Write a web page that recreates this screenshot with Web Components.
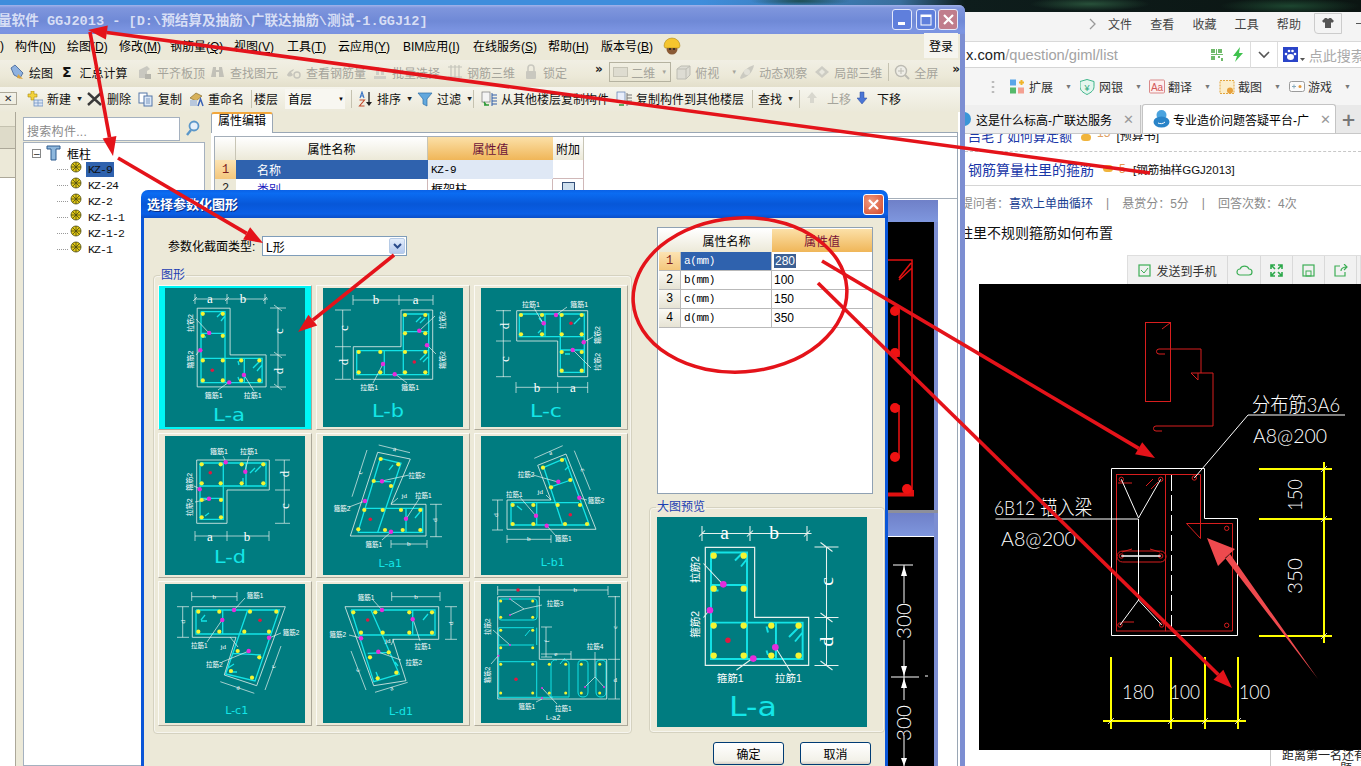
<!DOCTYPE html>
<html lang="zh">
<head>
<meta charset="utf-8">
<title>GGJ2013</title>
<style>
html,body{margin:0;padding:0;background:#1b3f6e;overflow:hidden;}
body{width:1361px;height:766px;font:12px "Liberation Sans","Noto Sans CJK SC",sans-serif;}
</style>
</head>
<body>
<gg-desktop>
  <browser-window></browser-window>
  <app-window></app-window>
  <cad-strip></cad-strip>
  <param-dialog></param-dialog>
  <red-marks></red-marks>
</gg-desktop>
<script>
class ShadowEl extends HTMLElement {
  constructor() {
    super();
    this.attachShadow({ mode: "open" });
  }
  connectedCallback() {
    this.shadowRoot.innerHTML = this.render();
  }
}
const CJK = '"Liberation Sans","Noto Sans CJK SC",sans-serif';
const MONO = '"Liberation Mono","Noto Sans CJK SC",monospace';

// toolbar icons, 16x16
const ICONS = {
  draw: '<path d="M2 4l4-3 8 8-3 5-6-3z" fill="#8fb2e0" stroke="#3c5f94" stroke-width=".8"/><path d="M9 10l5 5-6-1z" fill="#d9a441"/>',
  plain: '<path d="M2 14V6l8-4 3 3-3 2v7z" fill="#c9c8c0"/><rect x="8" y="10" width="6" height="5" fill="#b6b5ac"/>',
  binoc: '<path d="M3 3h3v3h3V3h3l2 10H9V8H6v5H1z" fill="#c2c1b8"/>',
  glass: '<path d="M1 11c1-3 4-5 7-6l-1 2-2 1 2 3c-2 2-5 2-6 0z" fill="#c6c5bc"/><circle cx="11" cy="11" r="3" fill="none" stroke="#c6c5bc" stroke-width="1.5"/>',
  batch: '<path d="M2 12h12v3H2zM4 3h3v8H4zM9 5h3v6H9z" fill="#cfcec5"/>',
  grid: '<path d="M1 3h14M1 13h14M4 1v14M8 1v14M12 1v14" stroke="#c4c3ba" fill="none" stroke-width="1.2"/>',
  lock: '<rect x="3" y="7" width="10" height="8" rx="1" fill="#c9c8bf"/><path d="M5 7V4a3 3 0 0 1 6 0v3" fill="none" stroke="#c9c8bf" stroke-width="1.6"/>',
  cube: '<path d="M2 5l4-3h9v9l-4 4H2z" fill="#dddcd3" stroke="#bdbcb3"/><path d="M2 5h9v10M11 5l4-3" fill="none" stroke="#bdbcb3"/>',
  orbit: '<path d="M1 14c2-6 7-11 14-13-1 7-6 12-13 14z" fill="#cbcac1"/><circle cx="8" cy="8" r="3" fill="#e2e1d8"/>',
  part: '<path d="M8 2l7 6-7 6-7-6z" fill="#cdccc3"/><path d="M5 8l3-3 3 3-3 3z" fill="#e8e7de"/>',
  zoom: '<circle cx="7" cy="7" r="5.5" fill="#eeede6" stroke="#bcbbb2" stroke-width="1.4"/><path d="M7 4v6M4 7h6" stroke="#bcbbb2"/><path d="M11 11l4 4" stroke="#bcbbb2" stroke-width="2"/>',
  add: '<path d="M4 0h3v3h3v3H7v3H4V6H1V3h3z" fill="#f2d23c" stroke="#a98b12" stroke-width=".6"/><rect x="7" y="9" width="9" height="6" fill="#dde7f5" stroke="#6b8fc0" stroke-width=".8"/><path d="M7 12h9M11 9v6" stroke="#6b8fc0" stroke-width=".7"/>',
  del: '<path d="M1 2l13 12M14 2L1 14" stroke="#3a3a3a" stroke-width="2.4"/>',
  copy: '<rect x="1" y="2" width="8" height="10" fill="#fff" stroke="#5577a8"/><rect x="6" y="5" width="8" height="10" fill="#dce8f7" stroke="#5577a8"/><path d="M8 8h4M8 10h4M8 12h4" stroke="#5577a8" stroke-width=".7"/>',
  rename: '<path d="M2 7l6-5 6 3-6 5z" fill="#d7b15a" stroke="#7a5f22" stroke-width=".6"/><path d="M2 9h7v6H2z" fill="#b8c7dc"/><path d="M10 15l2.500-7 2.500 7" fill="none" stroke="#3d64b5" stroke-width="1.5"/>',
  sort: '<path d="M12 1v12" stroke="#222" stroke-width="1.3"/><path d="M9 11l3 4 3-4z" fill="#222"/><path d="M3 7l2-6 2 6M3.800 5h2.400" fill="none" stroke="#3a74c4" stroke-width="1.100"/><path d="M2.500 9h5l-5 6h5" fill="none" stroke="#c04a2c" stroke-width="1.100"/>',
  funnel: '<path d="M1 2h14l-5 6v7l-4-2V8z" fill="#62a8dd" stroke="#2d6ea7" stroke-width=".7"/>',
  copyfrom: '<rect x="1" y="1" width="8" height="10" fill="#f4f4f4" stroke="#777" stroke-width=".7"/><path d="M3 14h5M3 11l2 3" stroke="#2c9a37" stroke-width="1.500"/><path d="M11 4h5M11 7h5M11 10h5M11 13h5" stroke="#315fa8" stroke-width="1.200"/><path d="M11 2v13" stroke="#315fa8"/>',
  copyto: '<rect x="1" y="1" width="8" height="10" fill="#e8eefb" stroke="#5c7bb0" stroke-width=".7"/><path d="M3 14h5" stroke="#2c9a37" stroke-width="1.500"/><path d="M11 4h5M11 7h5M11 10h5M11 13h5" stroke="#777" stroke-width="1.200"/><path d="M11 2v13" stroke="#777"/>',
  up: '<path d="M5 1l5 6H7v5H3V7H0z" fill="#d8d7ce"/>',
  down: '<path d="M3 1h4v6h3l-5 6-5-6h3z" fill="#4b76d6" stroke="#2c4c9a" stroke-width=".5"/>',
  coil: '<circle cx="6" cy="6" r="5" fill="#e3c914" stroke="#4b4a12" stroke-width=".8"/><path d="M1 6h10M6 1v10M2.500 2.500l7 7M9.500 2.500l-7 7" stroke="#4b4a12" stroke-width=".8"/>',
};

function icon(name, size) {
  return `<svg width="${size || 16}" height="${size || 16}" viewBox="0 0 16 16" style="flex:none;display:block">${ICONS[name] || ""}</svg>`;
}

class GgDesktop extends ShadowEl {
  render() {
    return `<style>
      :host{display:block;position:relative;width:1361px;height:766px;overflow:hidden;
        background:
          radial-gradient(60px 7px at 1090px 4px,#28513a,transparent),
          radial-gradient(70px 8px at 1290px 6px,#1d4630,transparent),
          radial-gradient(50px 5px at 800px 1px,#1e4d52,transparent),
          linear-gradient(90deg,#3f8ddc 0,#3f8ddc 700px,#3a6f9d 900px,#0e1d1c 965px,#0b1512 1361px);}
    </style><slot></slot>`;
  }
}

class ToolItem extends ShadowEl {
  render() {
    const off = this.hasAttribute("off");
    const ic = this.getAttribute("icon");
    const caret = this.hasAttribute("caret");
    return `<style>
      :host{display:flex;align-items:center;gap:4px;flex:none;height:100%;color:${off ? "#a5a49b" : "#111"};white-space:nowrap;}
      .c{font-size:7px;margin-left:1px;color:${off ? "#a5a49b" : "#222"};transform:scaleX(1.1)}
    </style>${ic ? icon(ic) : ""}<slot></slot>${caret ? '<span class="c">▼</span>' : ""}`;
  }
}

class AppWindow extends ShadowEl {
  render() {
    const menus = [["",15,")"],["构件(<u>N</u>)",52],["绘图(<u>D</u>)",52],["修改(<u>M</u>)",51],["钢筋量(<u>Q</u>)",64],["视图(<u>V</u>)",53],["工具(<u>T</u>)",51],["云应用(<u>Y</u>)",65],["BIM应用(<u>I</u>)",70],["在线服务(<u>S</u>)",75],["帮助(<u>H</u>)",53],["版本号(<u>B</u>)",62]];
    const tree = ["KZ-9","KZ-24","KZ-2","KZ-1-1","KZ-1-2","KZ-1"];
    return `<style>
      :host{position:absolute;left:0;top:5px;width:965px;height:761px;display:flex;flex-direction:column;overflow:hidden;
        background:#7c8ed2;border-top-right-radius:6px;}
      .title{height:29px;flex:none;display:flex;align-items:center;box-sizing:border-box;padding:0 7px 0 0;
        background:linear-gradient(#a2b3ea 0,#7f96dd 10%,#6f89d6 55%,#7c95e2 90%,#7a92df 100%);}
      .title b{font:700 13.6px ${MONO};color:#d7def5;margin:-2px 0 0 -2px;white-space:pre;flex:1;}
      .wb{width:20px;height:21px;margin-left:4px;border:1px solid #e4e9fb;border-radius:3px;box-sizing:border-box;background:#5f7fdc;display:flex;align-items:center;justify-content:center;}
      .wb:last-child{margin-left:2px;background:#c07d8c;}
      .menu{height:26px;flex:none;display:flex;align-items:center;background:#ece9d8;margin-right:5px;padding-bottom:3px;box-sizing:border-box;}
      .menu span{flex:none;display:block;white-space:nowrap;}
      .menu u{text-underline-offset:1px;}
      .login{margin-left:auto;margin-right:2px;background:#f6f5ef;padding:4px 5px;}
      .hat{width:18px;height:18px;}
      .r1{height:27px;flex:none;display:flex;align-items:center;padding:0 0 3px 9px;box-sizing:border-box;margin-right:5px;
        background:linear-gradient(#f1efe4,#ece9d8 60%,#e3dfcb);}
      .r2{height:26px;flex:none;display:flex;align-items:center;padding-bottom:3px;box-sizing:border-box;margin-right:5px;background:linear-gradient(#f6f5ee,#ebe8d8);}
      .sep{flex:none;width:1px;height:18px;background:#c5c2b0;}
      .chev{font:700 12px "DejaVu Sans",sans-serif;color:#222;margin-top:-6px;}
      .combo{flex:none;box-sizing:border-box;display:flex;align-items:center;height:20px;white-space:nowrap;}
      .x{flex:none;width:17px;height:13px;border:1px solid #aca899;border-left:0;box-sizing:border-box;margin-right:10px;display:flex;align-items:center;justify-content:center;color:#333;font-size:10px;}
      .content{flex:1;display:flex;min-height:0;margin:-1px 5px 0 0;background:#ece9d8;}
      .nav{flex:none;width:16px;display:flex;flex-direction:column;border-right:1px solid #aca899;box-sizing:border-box;}
      .nav i{display:block;}
      .tree{flex:none;width:182px;margin-left:7px;display:flex;flex-direction:column;}
      .search{height:24px;margin-top:5px;display:flex;flex:none;}
      .search div{flex:1;border:1px solid #a5b1bf;background:#fff;color:#8a8a8a;padding:4px 3px;box-sizing:border-box;letter-spacing:.3px;}
      .search svg{margin:2px 4px 0 5px;}
      .list{flex:1;margin-top:1px;background:#fff;border:1px solid #a5b1bf;padding-top:2px;box-sizing:border-box;}
      .tr{height:16px;display:flex;align-items:center;font:11.5px ${MONO};color:#111;padding-left:33px;gap:3px;}
      .tr .d{width:11px;border-top:1px dotted #999;margin-right:-1px;}
      .tr em{font-style:normal;padding:1px 2px;line-height:13px;letter-spacing:-.9px;margin-left:-3px;}
      .tr.on em{background:#2f62ae;color:#111;}
      .root{height:16px;display:flex;align-items:center;padding-left:8px;gap:5px;font-family:${CJK};}
      .box{width:9px;height:9px;border:1px solid #888;font:9px/8px "DejaVu Sans";text-align:center;box-sizing:border-box;color:#222;}
      .main{flex:1;margin-left:6px;display:flex;flex-direction:column;min-width:0;margin-right:2px;box-shadow:2px 0 0 #fff;}
      .tabs{height:20px;flex:none;display:flex;border-bottom:1px solid #9aa7b5;}
      .tab{width:62px;box-sizing:border-box;border:1px solid #9aa7b5;border-bottom:0;border-top:2px solid #f2a73c;border-radius:3px 3px 0 0;background:#fff;text-align:center;line-height:15px;height:21px;}
      .panel{flex:1;background:#fff;border-right:1px solid #9aa7b5;padding:3px 0 0 3px;}
      .tbl{border:1px solid #a4aeb9;border-right:0;display:grid;grid-template-columns:21px 192px 125px 31px 1fr;grid-template-rows:23px 19px 19px;background:#fff;}
      .tbl div{box-sizing:border-box;display:flex;align-items:center;}
      .h{justify-content:center;background:linear-gradient(#fff,#ece9d8);border-right:1px solid #c8c5b5;}
      .hv{justify-content:center;background:linear-gradient(#fbe0a8,#f0b658);color:#6b1238;}
      .n{justify-content:center;background:linear-gradient(#fce3b3,#f4c77c);color:#7a1c1c;font:12px ${MONO};}
      .sel{background:#2f62ae;color:#fff;padding-left:21px;}
      .val{background:#dfe8f5;padding-left:3px;font:11px ${MONO};letter-spacing:-.3px;}
      .e{border-bottom:1px solid #d0b8b8;border-right:1px solid #d0b8b8;}
      .chk{width:11px;height:11px;border:1px solid #33507a;background:#cfe0ee;}
    </style>
    <div class="title"><b>量软件 GGJ2013 - [D:\\预结算及抽筋\\广联达抽筋\\测试-1.GGJ12]</b>
      <div class="wb"><svg width="12" height="12"><rect x="2" y="8" width="7" height="3" fill="#fff"/></svg></div>
      <div class="wb"><svg width="12" height="12"><rect x="1" y="1" width="10" height="10" fill="none" stroke="#fff" stroke-width="1"/><rect x="1" y="1" width="10" height="2" fill="#fff"/></svg></div>
      <div class="wb"><svg width="13" height="13"><path d="M2 2l9 9M11 2l-9 9" stroke="#fff" stroke-width="2.200"/></svg></div>
    </div>
    <div class="menu">
      ${menus.map(m => `<span style="width:${m[1]}px">${m[2] || m[0]}</span>`).join("")}
      <svg class="hat" viewBox="0 0 18 18"><circle cx="9" cy="12" r="5.500" fill="#8a5a34"/><path d="M1 9a8 8 0 0 1 16 0l-1 2H2z" fill="#f5c52e" stroke="#a27d12" stroke-width=".5"/><circle cx="7" cy="12" r="1" fill="#222"/><circle cx="11" cy="12" r="1" fill="#222"/></svg>
      <span class="login">登录</span>
    </div>
    <div class="r1">
      <tool-item icon="draw" style="width:53px">绘图</tool-item>
      <tool-item style="width:75px"><b style="font:700 14px 'DejaVu Sans';margin-right:4px">Σ</b>汇总计算</tool-item>
      <tool-item off icon="plain" style="width:73px">平齐板顶</tool-item>
      <tool-item off icon="binoc" style="width:76px">查找图元</tool-item>
      <tool-item off icon="glass" style="width:86px">查看钢筋量</tool-item>
      <tool-item off icon="batch" style="width:75px">批量选择</tool-item>
      <tool-item off icon="grid" style="width:76px">钢筋三维</tool-item>
      <tool-item off icon="lock" style="width:72px">锁定</tool-item>
      <span class="chev" style="width:15px">»</span>
      <div class="combo" style="width:62px;border:1px solid #b5b2a0;color:#a5a49b;padding-left:3px;gap:3px;margin-right:4px"><span style="width:15px;height:10px;background:#dedcd0;border:1px solid #c5c3b5;box-sizing:border-box"></span>二维<span style="font-size:6px;margin-left:auto;margin-right:3px">▼</span></div>
      <tool-item off icon="cube" style="width:64px">俯视<span style="font-size:6px;margin-left:8px">▼</span></tool-item>
      <tool-item off icon="orbit" style="width:75px">动态观察</tool-item>
      <tool-item off icon="part" style="width:74px">局部三维</tool-item>
      <span class="sep" style="margin-right:5px"></span>
      <tool-item off icon="zoom" style="width:58px">全屏</tool-item>
      <span class="chev">»</span>
    </div>
    <div class="r2">
      <span class="x">✕</span>
      <tool-item icon="add" caret style="width:60px">新建</tool-item>
      <tool-item icon="del" style="width:51px">删除</tool-item>
      <tool-item icon="copy" style="width:50px">复制</tool-item>
      <tool-item icon="rename" style="width:63px">重命名</tool-item>
      <span class="sep" style="margin-right:2px"></span>
      <tool-item style="width:31px">楼层</tool-item>
      <div class="combo" style="width:60px;background:#f8f7f1;padding-left:3px;margin-right:6px">首层<span style="font-size:6px;margin-left:auto;margin-right:1px">▼</span></div>
      <span class="sep" style="margin-right:5px"></span>
      <tool-item icon="sort" caret style="width:60px">排序</tool-item>
      <tool-item icon="funnel" caret style="width:56px">过滤</tool-item>
      <span class="sep" style="margin-right:7px"></span>
      <tool-item icon="copyfrom" style="width:135px">从其他楼层复制构件</tool-item>
      <tool-item icon="copyto" style="width:136px">复制构件到其他楼层</tool-item>
      <span class="sep" style="margin-right:5px"></span>
      <tool-item caret style="width:41px">查找</tool-item>
      <span class="sep" style="margin-right:7px"></span>
      <tool-item off icon="up" style="width:50px">上移</tool-item>
      <tool-item icon="down" style="width:50px">下移</tool-item>
    </div>
    <div class="content">
      <div class="nav">
        <i style="height:14px;background:#ece9d8;border-bottom:1px solid #c5c2b0"></i>
        <i style="height:21px;background:#dedbc9;border-bottom:1px solid #aca899"></i>
        <i style="height:28px;background:#ece9d8"></i>
        <i style="flex:1;background:#fff;border-top:1px solid #aca899"></i>
      </div>
      <div class="tree">
        <div class="search"><div>搜索构件...</div>
          <svg width="16" height="18" viewBox="0 0 16 18"><circle cx="9" cy="7" r="4.500" fill="#e6f0fa" stroke="#5b97c9" stroke-width="1.800"/><path d="M6 11l-4 5" stroke="#5b97c9" stroke-width="2.400"/></svg></div>
        <div class="list">
          <div class="root"><span class="box">−</span>
            <svg width="15" height="16" viewBox="0 0 15 16"><path d="M1 1h13v3H10v11H5V4H1z" fill="#8fb8dd" stroke="#2f5d8f" stroke-width="1"/></svg>
            <span style="margin-left:1px">框柱</span></div>
          ${tree.map((t, i) => `<div class="tr ${i ? "" : "on"}"><span class="d"></span>${icon("coil", 16)}<em>${t}</em></div>`).join("")}
        </div>
      </div>
      <div class="main">
        <div class="tabs"><div class="tab">属性编辑</div></div>
        <div class="panel">
          <div class="tbl">
            <div class="h"></div><div class="h">属性名称</div><div class="hv">属性值</div><div class="h">附加</div><div></div>
            <div class="n">1</div><div class="sel">名称</div><div class="val">KZ-9</div><div class="e"></div><div></div>
            <div class="n" style="background:#ece9d8;color:#222">2</div><div class="e" style="padding-left:21px;color:#1a1ac0">类别</div><div class="e" style="padding-left:3px">框架柱</div><div class="e" style="justify-content:center"><span class="chk"></span></div><div></div>
          </div>
        </div>
      </div>
    </div>`;
  }
}

class CadStrip extends ShadowEl {
  render() {
    return `<style>:host{position:absolute;left:888px;top:200px;width:50px;height:566px;display:block}
      svg{display:block} text{font:300 20px Lato,"Liberation Sans";fill:#fff}</style>
    <svg width="50" height="566" viewBox="888 200 50 566">
      <defs><linearGradient id="p" x1="0" y1="0" x2="0" y2="1"><stop offset="0" stop-color="#6f80c8"/><stop offset="1" stop-color="#7f97de"/></linearGradient></defs>
      <rect x="888" y="200" width="50" height="22" fill="url(#p)"/>
      <rect x="888" y="222" width="46" height="288" fill="#000"/>
      <rect x="934" y="222" width="4" height="544" fill="#7c8ed2"/>
      <rect x="888" y="510" width="50" height="3" fill="#8d8f9a"/>
      <rect x="888" y="513" width="46" height="24" fill="url(#p)"/>
      <rect x="888" y="537" width="46" height="229" fill="#000"/>
      <rect x="888" y="536" width="46" height="1" fill="#fff"/>
      <g fill="none" stroke="#e01010" stroke-width="1.600">
        <path d="M888 260H912V490M899 278L911 263M899 280L912 268" />
        <path d="M899 307V357M899 405V458"/>
        <path d="M888 494.500H912V490" stroke-width="4"/>
      </g>
      <g fill="#f01212"><circle cx="895" cy="311" r="5"/><circle cx="895" cy="353" r="5"/><circle cx="895" cy="408" r="5"/><circle cx="895" cy="457" r="5"/><circle cx="907" cy="489" r="5"/></g>
      <g stroke="#fff" fill="none" stroke-width="1"><path d="M893 565H913M904 565V603M904 640V700M904 735V766M891 677H919M925 676H928"/></g>
      <g fill="#fff"><path d="M904 566l-3 10h6zM904 676l-3-10h6zM904 678l-3 10h6zM904 766l-3-8h6z"/></g>
      <text transform="translate(911 621) rotate(-90)" text-anchor="middle" lengthAdjust="spacingAndGlyphs" textLength="36">300</text>
      <text transform="translate(911 723) rotate(-90)" text-anchor="middle" lengthAdjust="spacingAndGlyphs" textLength="36">300</text>
    </svg>`;
  }
}

// thumbnail drawings, all in a 140x140 box
const FIGS = {
  "L-a": {
    o: "32.2,20.2 65.1,20.2 65.1,66.9 101.1,66.9 101.1,98.9 32.2,98.9",
    c: "M36 23.600H60V94.700M36 23.600V94.700H97.100V70.400H36M36 45.300H60M79.300 70.400V94.700M52 29l5-5M56 33l4-5M88 80l6-6M92 83l5-6M38 49h3M56 49l3-1M73 73l1 4M73 89l1 3",
    y: [[37.8,25.8],[57.8,25.8],[37.8,47.8],[57.8,47.8],[37.8,72.4],[57.8,72.4],[76.2,72.4],[94.400,72.4],[37.8,92.4],[57.8,92.4],[76.2,92.4],[94.400,92.4]],
    m: [[44.2,44.9],[35.3,62.2],[78.9,86.9],[64.2,94.4]], r: [47.3,82.2],
    w: "M30 11H103M30 6V16M62 6V16M100 6V16M28 13l4-4M60 13l4-4M98 13l4-4M113 20V99M105 20H121M105 67H121M105 99H121M109 17l8 6M109 64l8 6M109 96l8 6M44 45L31 31M35 62l-4 5M64 94l-11 8M79 87l10 16",
    t: [["a",45,10,0,13],["b",78,10,0,13],["c",113,43,-90,13],["d",113,83,-90,13],["拉筋2",25,35,-90,7],["箍筋2",25,71.6,-90,7],["箍筋1",48.7,107.5,0,7],["拉筋1",87.6,107.5,0,7]],
    title: "L-a", tx: 64, ty: 126.5,
  },
  "L-b": {
    o: "78,22 109.7,22 109.7,91.3 30.3,91.3 30.3,58.7 78,58.7",
    c: "M80.300 26H105.700V86.700H33.700V62.700H105.700M80.300 26V86.700M80.300 43.700H105.700M61.300 62.700V86.700M97 35l5-5M93 34l5-5M97 72l6-6M100 74l5-5",
    y: [[82,27],[102.3,27],[82,45.3],[102.3,45.3],[35.7,64],[57.3,64],[82,64],[102.3,64],[35.7,84.3],[57.3,84.3],[82,84.3],[102.3,84.3]],
    m: [[96.3,42.7],[104,57.3],[60,76],[71.7,86.3]], r: [91.3,74],
    w: "M30 12H110M30 7V17M76 7V17M110 7V17M19.700 22V91M12 22H28M12 58.700H28M12 91.300H28M96 43l16-15M104 57l9 9M60 76L50 95M72 86l12 9",
    t: [["b",53,11,0,13],["a",92.7,11,0,13],["c",20,40,-90,13],["d",20,74,-90,13],["拉筋2",119,32,-90,7],["箍筋2",119,72,-90,7],["拉筋1",46.3,99.3,0,7],["箍筋1",87.3,99.3,0,7]],
    title: "L-b", tx: 65, ty: 122,
  },
  "L-c": {
    o: "35.7,22.7 106.7,22.7 106.7,88.7 76.7,88.7 76.7,53 35.7,53",
    c: "M38.300 26H103.300V84.300H79.300V26M38.300 26V48.700H103.300M64 26V48.700M79.300 62H103.300M58 30l4 5M57 45l3-3M93 36l6-6M84 66l5 0",
    y: [[40,27],[61,27],[80.7,27],[100.7,27],[40,46.3],[61,46.3],[80.7,46.3],[100.7,46.3],[80.700,64],[100.7,64],[80.700,82.7],[100.7,82.7]],
    m: [[62.7,35.3],[75,27],[102.7,54.3],[91.7,62]], r: [90,35.3],
    w: "M35 99.300H107M35 94V105M76.700 94V105M106.700 94V105M22.300 22V89M15 22.700H30M15 53H30M15 88.700H30M62 35L53 20M75 27l11-8M103 54l9-5M92 62l18 18",
    t: [["b",56,99,0,13],["a",92,99,0,13],["d",23,38,-90,13],["c",23,71,-90,13],["拉筋1",50,16,0,7],["箍筋1",98.3,16,0,7],["箍筋2",116,47,-90,7],["拉筋2",116,73.7,-90,7]],
    title: "L-c", tx: 65, ty: 122,
  },
  "L-d": {
    o: "31.7,24 104.3,24 104.3,54 62,54 62,87.3 31.7,87.3",
    c: "M35 27H101V50H35M35 27V83.300H58.300V27M81 27V50M35 62.300H58.300M90 36l6-6M85 37l5-5M78 46v-4M40 80l4-3",
    y: [[36.7,28.3],[55.7,28.3],[76.7,28.3],[98.3,28.3],[36.7,47.3],[55.7,47.3],[76.7,47.3],[98.3,47.3],[36.7,64],[56,64],[36.7,81.3],[56,81.3]],
    m: [[60.7,26.3],[80.3,35.7],[34.7,53.3],[44,62.7]], r: [45.3,36.7],
    w: "M30 100H104M30 95V105M62 95V105M104 95V105M119.300 24V87M110 24H125M110 54H125M110 87.300H125M61 26l-3-6M80 35l4-15M35 53l-6-3M44 63l-14 3",
    t: [["a",45,100,0,13],["b",82,100,0,13],["d",119,38,-90,13],["c",119,70,-90,13],["箍筋1",54,15.7,0,7],["拉筋1",84,15.7,0,7],["箍筋2",24.3,45.7,-90,7],["拉筋2",24.3,71.3,-90,7]],
    title: "L-d", tx: 65, ty: 120,
  },
  "L-a1": {
    o: "54.7,16.3 87.3,23 68,68.3 103,68.3 103,100 27.3,100",
    c: "M57.300 22.300L35.300 94.700V96.300H99.700V72.300H40M57.300 22.300L78 27.300L54.700 96.300M50.700 45.700H68M83 72.300V96.300M66 34l4-5M92 82l5-6",
    y: [[57.7,23],[75.3,28.3],[50.7,45],[68,50],[41.3,74],[59.7,74],[78,74],[97.3,74],[35.3,93.3],[62,94],[79.7,94],[97.3,94]],
    m: [[59,45.3],[42,65],[83,82.7],[68,95.7]], r: [47.3,83.3],
    w: "M55.700 9L87 16.700M44 14L29 60.700M113 68.300V100.700M107 68.300H119M107 100.700H119M68 108H104M68 104V112M104 104V112M59 45l27-6M42 65l-16 6M83 83l13-20M68 96l-9 8M68 68l7-6",
    t: [["a",71.7,13.3,14,7],["c",37.3,36.7,-72,7],["d",112.3,84,-90,7],["b",85.7,108,0,7],["jd",81.3,59.7,0,7],["拉筋2",93.7,39,0,6.500],["拉筋1",100.3,59,0,6.500],["箍筋2",19,72.3,0,6.500],["箍筋1",50.7,108,0,6.500]],
    title: "L-a1", tx: 67.3, ty: 127.3, ts: 11,
  },
  "L-b1": {
    o: "26,64 70,64 56.7,29.3 85,18 115,93.3 26,93.3",
    c: "M30 66.700H98M30 66.700V89H108.300L84 22.300L62.700 31.300L81.700 89M55.700 66.700V89M68.300 51.300L90 44M36 70l5 4M88 30l-4 4",
    y: [[31.7,69],[52.3,69],[76.7,69],[99,69],[31.7,88],[52.3,88],[84,88],[106,88],[62,31.7],[81,24],[70,51.3],[89.3,44]],
    m: [[77.3,45.7],[98.3,61.7],[55,79.7],[65.7,89.7]], r: [89.3,78.7],
    w: "M53.300 22.300L81.700 9.700M93.300 14.700L109.300 54M16.700 64V94M11 64H22M11 94H22M26 103.300H70M26 99V107M70 99V107M77 46L52 39M98 62l8 2M55 80L38 60M66 90l9 10M70 64l-5-5",
    t: [["a",69.3,16.7,-23,7],["c",101.7,34,68,7],["d",15,79,-90,7],["b",47.7,103.3,0,7],["jd",59.3,55.7,0,7],["拉筋2",45,38.3,0,6.500],["拉筋1",33.3,58,0,6.500],["箍筋2",115,64,0,6.500],["箍筋1",82.3,102.3,0,6.500]],
    title: "L-b1", tx: 71.7, ty: 126.7, ts: 11,
  },
  "L-c1": {
    o: "27.3,22.7 120.3,22.7 91.7,101.7 59.3,91 71,53.3 27.3,53.3",
    c: "M31 26H114.300L90 97L60.700 90L82.700 26M31 26V50H105M57.700 26V50M67.700 69.300L96 71M36 36l4-5M36 37l6 0M63 84l6-4M64 88l8 0",
    y: [[33.3,27.7],[54.3,27.7],[85,27.7],[111.3,27.7],[33.3,47.7],[54.3,47.7],[79.3,47.7],[104,47.7],[72.7,67],[94.3,73.3],[66,87],[87,93.7]],
    m: [[69,26],[57.3,36],[104,53.7],[83.7,67]], r: [95,36.3],
    w: "M26.700 12.700H72M26.700 8V17M72 8V17M17.700 22.700V53.300M12 22.700H24M12 53.300H24M116 62L100 106M55.300 97.700L89.300 109.300M69 26l11-12M57 36L42 58M104 54l12-5M84 67L57 78M65 53l8 10",
    t: [["b",49.3,12.7,0,7],["d",17.7,37.7,-90,7],["c",108.3,82.700,-70,7],["a",73.3,103.7,18,7],["jd",58.3,62.7,0,7],["箍筋1",90,11,0,6.500],["拉筋1",34.3,61.7,0,6.500],["箍筋2",126,48.3,0,6.500],["拉筋2",49.3,80,0,6.500]],
    title: "L-c1", tx: 71.7, ty: 126, ts: 11,
  },
  "L-d1": {
    o: "22,22.7 115.7,22.7 115.7,55.3 69.7,55.3 83,96.7 50.7,101.7",
    c: "M28 26H112V51H37M28 26L50.700 97.700L76.300 90L48 26M89.700 26V51M44.700 69.300L68 68.300M100 36l5-6M53 88l2 5M72 78l3 4",
    y: [[30.3,28.3],[52.3,28.3],[86.3,28.3],[109,28.3],[38,48.7],[59.7,48.7],[86.3,48.7],[109,48.7],[47,73.3],[65.7,68.3],[54.7,94.3],[73.3,88.7]],
    m: [[59,26],[89.7,35.3],[38,54.3],[55.300,67.7]], r: [44.7,36],
    w: "M68.700 12.700H117M68.700 8V17M117 8V17M128 22.700V55.300M122 22.700H134M122 55.300H134M28 67L43 106M52 108.300L84.700 98.300M59 26L50 16M90 35l7 22M38 54l-12-3M55 68l23 8M71 55l-3 6",
    t: [["b",93,12.7,0,7],["d",128,39.3,-90,7],["c",34.7,86,-70,7],["a",68.7,104.3,-17,7],["jd",64.7,56.7,0,7],["箍筋1",43,13.7,0,6.500],["箍筋2",14.7,50.3,0,6.500],["拉筋1",99.7,62.7,0,6.500],["拉筋2",90.7,78.7,0,6.500]],
    title: "L-d1", tx: 78, ty: 127.7, ts: 11,
  },
  "L-a2": {
    o: "16.7,12.7 58.3,12.7 58.3,75.3 125.7,75.3 125.7,115 16.7,115",
    c: "M20 15H54Q56 15 56 18V33Q56 36 53 36H20Q17.700 36 17.700 33V18Q17.700 15 20 15M17.700 43.700H53M17.700 61H53M55.700 43.700V61M17.700 43.700V113.300H55.700V77.700H17.700M55.700 113.300H72M70 80V113M88 80V113M70 80Q71 75 76 76M82 76Q88 76 88 80M70 113H88M97 80V108Q97 113 102 113Q107 113 107 108V80Q107 76 102 76Q97 76 97 80M115 80V108Q115 113 120 113Q125 113 125 108V80Q125 76 120 76Q115 76 115 80M44 52l5-6M79 80l5-6",
    y: [[19.7,17],[51.7,17],[19.7,33.3],[51.7,33.3],[19.7,46.3],[51.7,46.3],[19.7,63.7],[51.7,63.7],[19.7,80.3],[51.7,80.3],[19.7,109],[51.7,109],[68.3,80.3],[84.7,80.3],[100.3,80.3],[118.7,80.3],[68.3,109],[84.7,109],[100.3,109],[118.7,109]],
    m: [[29,15],[29,31],[29,61],[17.500,71.700],[61,104],[104,103],[123,103],[61,114]], ms: 1, r: [35,95.3], r2: [37,6],
    w: "M16.700 6H127M16.700 2V11M58.300 2V11M127 2V11M134.300 12V115M127 12.700H139M127 75.300H139M127 115H139M65 43V73M60 43H71M60 73H71M60 70H90M90 67V75M29 31l14-6 18-4M29 15l14 10M12 46l17 15M17 72L10 80M61 115l-6 3M61 104l15 16M104 103l10-10V68M123 103l-9-10",
    t: [["b",94.300,6.3,0,7],["c",134.300,43.300,-90,7],["d",134.300,96,0,7],["f",65.700,57,-90,7],["e",74.700,70,0,7],["拉筋3",74,19.300,0,6.500],["拉筋2",6,42.700,-90,6.500],["拉筋4",114,62,0,6.500],["箍筋2",6,91,-90,6.500],["箍筋1",45.700,122,0,6.500],["拉筋1",82.300,124.300,0,6.500]],
    title: "L-a2", tx: 72.300, ty: 134, ts: 7, tc: "#fff",
  },
};

class SectionFig extends ShadowEl {
  render() {
    const f = FIGS[this.getAttribute("name")];
    const size = Number(this.getAttribute("size") || 140);
    const big = size > 150;
    const dr = f.ms ? 1.500 : 2.100, mr = f.ms ? 1 : 2.200;
    const dots = (list, col, r) => list.map(p => `<circle cx="${p[0]}" cy="${p[1]}" r="${r}" fill="${col}"/>`).join("");
    const labels = f.t.map(l => {
      const serif = l[0].length < 3 && /^[a-z]+$/.test(l[0]);
      return `<text transform="translate(${l[1]} ${l[2]}) rotate(${l[3]})" font-size="${l[4]}" font-family='${serif ? '"Liberation Serif"' : CJK}'>${l[0]}</text>`;
    }).join("");
    return `<style>
      :host{display:block;width:${size}px;height:${big ? size : size - 1}px;background:#007c80;flex:none;}
      svg{display:block}
      text{fill:#fff;text-anchor:middle;dominant-baseline:central;}
      text.tt{fill:${f.tc || "#14e6e8"};font-family:"DejaVu Sans",sans-serif;}
    </style>
    <svg width="${size}" height="${big ? size : size - 1}" viewBox="0 0 140 ${big ? 140 : 139}">
      <path d="${f.c}" fill="none" stroke="#13e3e6" stroke-width="${f.ms ? 1 : 1.300}"/>
      <polygon points="${f.o}" fill="none" stroke="#e8f2ee" stroke-width=".8"/>
      <path d="${f.w}" fill="none" stroke="#e8f2ee" stroke-width=".7"/>
      ${dots(f.y, "#f5f531", dr)}${dots(f.m, "#e62cdc", mr)}
      <circle cx="${f.r[0]}" cy="${f.r[1]}" r="1.800" fill="#e01840"/>
      ${f.r2 ? `<circle cx="${f.r2[0]}" cy="${f.r2[1]}" r="1.800" fill="#e01840"/>` : ""}
      ${labels}
      <text class="tt" x="${f.tx}" y="${f.ty}" font-size="${f.ts || 18}" ${f.ts ? "" : 'textLength="32" lengthAdjust="spacingAndGlyphs"'}>${f.title}</text>
    </svg>`;
  }
}

class ParamDialog extends ShadowEl {
  render() {
    const names = ["L-a","L-b","L-c","L-d","L-a1","L-b1","L-c1","L-d1","L-a2"];
    const rows = [["a(mm)","280"],["b(mm)","100"],["c(mm)","150"],["d(mm)","350"]];
    return `<style>
      :host{position:absolute;left:141px;top:190px;width:747px;height:600px;display:flex;flex-direction:column;box-sizing:border-box;
        background:#ece9d8;border-radius:7px 7px 0 0;overflow:hidden;}
      .cap{height:28px;flex:none;display:flex;align-items:center;padding:0 4px 0 6px;
        background:linear-gradient(#0a61e6 0,#0b6cf2 12%,#0757d8 50%,#0a5fe6 85%,#0a4ec8 100%);}
      .cap b{font:700 13px ${CJK};color:#fff;flex:1;text-shadow:1px 1px 0 #0a2f88;margin-top:-2px;}
      .cls{width:21px;height:21px;border:1px solid #fff;border-radius:3px;box-sizing:border-box;background:radial-gradient(circle at 35% 35%,#ef9a7e,#d3482a);display:flex;align-items:center;justify-content:center;}
      .body{flex:1;display:flex;gap:17px;padding:9px 0 0 9px;border:solid #0a56d8;border-width:0 3px;min-height:0;}
      .left{width:479px;flex:none;}
      .typ{display:flex;align-items:center;height:20px;margin:9px 0 0 15px;}
      .typ label{width:94px;margin-top:-2px;}
      .sel{width:145px;height:20px;box-sizing:border-box;border:1px solid #7f9db9;background:#fff;display:flex;align-items:center;padding-left:3px;justify-content:space-between;}
      .arr{width:16px;height:16px;margin-right:1px;border:1px solid #b6cbe6;border-radius:2px;box-sizing:border-box;background:linear-gradient(#e4edfb,#b4c9ee);display:flex;align-items:center;justify-content:center;}
      fieldset{margin:0;padding:0;border:1px solid #d5d2c0;border-radius:4px;box-shadow:inset 0 0 0 1px #f6f5ee;min-inline-size:0;}
      legend{color:#1d3fb3;padding:0 1px;margin-left:6px;line-height:12px;height:12px;font-size:12px;}
      .figs{margin-top:13px;}
      .grid{display:grid;grid-template-columns:repeat(3,154px);grid-auto-rows:145px;gap:3px 4px;padding:4px 0 7px 4px;}
      .cell{box-sizing:border-box;padding:2px 8px 4px 6px;border:1px solid;border-color:#fbfaf5 #aca899 #aca899 #fbfaf5;margin:0;}
      .cell.on{background:#00f6f6;}
      .right{width:236px;flex:none;display:flex;flex-direction:column;}
      .props{margin-left:8px;width:216px;height:267px;box-sizing:border-box;border:1px solid #8fa1b3;background:#fff;display:grid;grid-template-columns:22px 91px 100px;grid-auto-rows:19px;grid-template-rows:23px;align-content:start;padding:1px 0 0 1px;font:11px ${MONO};}
      .props div{display:flex;align-items:center;box-sizing:border-box;}
      .ph{justify-content:center;font:12px ${CJK};background:linear-gradient(#fff,#ece9d8);}
      .pv{justify-content:center;font:12px ${CJK};color:#7a1338;background:linear-gradient(#fbe0a8,#f0b658);}
      .pn{justify-content:center;background:linear-gradient(#fbfaf5,#e6e3d4);border-bottom:1px solid #b9b9b9;border-right:1px solid #b9b9b9;font-size:12px;}
      .pn.a{background:linear-gradient(#fce3b3,#f4c77c);color:#7a1c1c;}
      .pk{padding-left:3px;border-bottom:1px solid #b9b9b9;border-right:1px solid #b9b9b9;letter-spacing:-.4px;}
      .pk.a{background:#2f62ae;color:#fff;}
      .pc{padding-left:2px;border-bottom:1px solid #b9b9b9;font:12px "Liberation Sans";}
      .pc i{font-style:normal;background:#3d6093;color:#fff;padding:0 1px;}
      .prev{margin-top:7px;height:232px;box-sizing:border-box;}
      .prev section-fig{margin:4px 0 0 7px;}
      .btns{display:flex;gap:16px;margin:9px 0 0 64px;}
      .btn{width:71px;height:23px;box-sizing:border-box;border:1px solid #003c74;border-radius:3px;background:linear-gradient(#fff,#f2f1e8 85%,#d6d0c5);display:flex;align-items:center;justify-content:center;}
    </style>
    <div class="cap"><b>选择参数化图形</b>
      <div class="cls"><svg width="13" height="13"><path d="M2 2l9 9M11 2l-9 9" stroke="#fff" stroke-width="2.200"/></svg></div></div>
    <div class="body">
      <div class="left">
        <div class="typ"><label>参数化截面类型:</label>
          <div class="sel">L形<span class="arr"><svg width="9" height="7"><path d="M1 1l3.500 3.500L8 1" fill="none" stroke="#2a4a8a" stroke-width="2"/></svg></span></div></div>
        <fieldset class="figs"><legend>图形</legend>
          <div class="grid">${names.map((n, i) => `<div class="cell ${i ? "" : "on"}"><section-fig name="${n}"></section-fig></div>`).join("")}</div>
        </fieldset>
      </div>
      <div class="right">
        <div class="props">
          <div class="ph"></div><div class="ph">属性名称</div><div class="pv">属性值</div>
          ${rows.map((r, i) => `<div class="pn ${i ? "" : "a"}">${i + 1}</div><div class="pk ${i ? "" : "a"}">${r[0]}</div><div class="pc">${i ? r[1] : "<i>" + r[1] + "</i>"}</div>`).join("")}
        </div>
        <fieldset class="prev"><legend>大图预览</legend><section-fig name="L-a" size="210"></section-fig></fieldset>
        <div class="btns"><div class="btn">确定</div><div class="btn">取消</div></div>
      </div>
    </div>`;
  }
}

class CadDrawing extends ShadowEl {
  render() {
    const lbl = 'fill="#fff" font-weight="300" font-family=\'Lato,"Noto Sans CJK SC",sans-serif\'';
    return `<style>:host{display:block;width:382px;height:466px;background:#000}svg{display:block}</style>
    <svg width="382" height="466" viewBox="979 284 382 466">
      <g fill="none" stroke="#d81e1e" stroke-width="1">
        <rect x="1145.500" y="322.500" width="25" height="79"/>
        <path d="M1162 329l8-6M1159 349h42v24M1191 373h22v53h-57M1191 373l7 7v-7M1159 349a2.500 2.500 0 0 0 0 5h6M1156 426a2.500 2.500 0 0 0 0 5h6"/>
        <rect x="1116.500" y="474.500" width="49" height="156.500"/>
        <path d="M1165.500 474.500H1200.500V523.500H1232.500V631H1165.500M1186.500 523.500H1200.500V538.500ZM1118 483h14M1153 479l-7 7M1158 482l-7 7M1122 622h12"/>
        <rect x="1117" y="551" width="49" height="11" rx="5.500"/>
        <path d="M1122 552l10-3M1160 552l-10-3"/>
        <g stroke-width="1"><circle cx="1121.300" cy="479.300" r="2.200"/><circle cx="1160.700" cy="479.300" r="2.200"/><circle cx="1121.300" cy="556" r="2.200"/><circle cx="1160.700" cy="556" r="2.200"/><circle cx="1120" cy="625" r="2.200"/><circle cx="1161.700" cy="625" r="2.200"/><circle cx="1194.300" cy="478" r="2.200"/><circle cx="1226.700" cy="528.300" r="2.200"/><circle cx="1226.700" cy="625.300" r="2.200"/></g>
      </g>
      <g fill="none" stroke="#fff" stroke-width="1">
        <path d="M1111.500 468.500H1204.500V518.500H1237.500V635.500H1111.500Z"/>
        <path d="M1171.500 475V632" stroke-dasharray="16 4"/>
        <path d="M995.500 519H1138.500V600M1121.300 479.300L1138.500 518M1160.700 479.300L1138.500 518M1138.500 600L1120 625M1138.500 600L1161.700 625M1194.300 478L1248 415H1345"/>
        <path d="M1121.300 556H1160.700" stroke-width="1.500"/>
      </g>
      <g fill="none" stroke="#ffff00" stroke-width="2">
        <path d="M1259 469H1332M1259 519H1332M1259 636H1332M1324 462V643"/>
        <path d="M1111 657V729M1171 657V729M1205 657V729M1238 657V729M1103 721H1246"/>
      </g>
      <g stroke="#fff" stroke-width=".8"><path d="M1321 472l6-6M1321 522l6-6M1321 639l6-6M1108 724l6-6M1168 724l6-6M1202 724l6-6M1235 724l6-6"/></g>
      <g ${lbl} font-size="20">
        <text x="1252" y="412" textLength="88" lengthAdjust="spacingAndGlyphs">分布筋3A6</text>
        <text x="1253" y="443" textLength="74" lengthAdjust="spacingAndGlyphs">A8@200</text>
        <text x="994" y="515" textLength="98" lengthAdjust="spacingAndGlyphs">6B12 锚入梁</text>
        <text x="1001" y="546" textLength="75" lengthAdjust="spacingAndGlyphs">A8@200</text>
        <text x="1122" y="699" textLength="32" lengthAdjust="spacingAndGlyphs">180</text>
        <text x="1170" y="699" textLength="30" lengthAdjust="spacingAndGlyphs">100</text>
        <text x="1239" y="699" textLength="31" lengthAdjust="spacingAndGlyphs">100</text>
        <text transform="translate(1302 511) rotate(-90)" textLength="32" lengthAdjust="spacingAndGlyphs">150</text>
        <text transform="translate(1302 594) rotate(-90)" textLength="36" lengthAdjust="spacingAndGlyphs">350</text>
      </g>
    </svg>`;
  }
}

class BrowserWindow extends ShadowEl {
  render() {
    const book = [["扩展",'<rect x="0" y="0" width="6" height="6" fill="#59a6e8"/><rect x="0" y="8" width="6" height="6" fill="#55b96a"/><rect x="8" y="8" width="6" height="6" fill="#f4a091"/><path d="M9 3h5M11.500 .5v5" stroke="#f0b429" stroke-width="2"/>',70],
      ["网银",'<path d="M7 0l7 2v5c0 4-3 6-7 8-4-2-7-4-7-8V2z" fill="#e4f6ee" stroke="#3db58a"/><text x="7" y="11" font-size="9" text-anchor="middle" fill="#2ba77a" font-family="Liberation Sans">¥</text>',69],
      ["翻译",'<rect x=".5" y=".5" width="15" height="13" rx="1" fill="#fdeeee" stroke="#d98a8a"/><text x="8" y="11" font-size="10" text-anchor="middle" fill="#d45858" font-family="Liberation Sans">Aa</text>',70],
      ["截图",'<rect x="1" y="1" width="14" height="13" fill="#fbeecb" stroke="#e2a640" stroke-dasharray="2 1"/><circle cx="11" cy="11" r="3" fill="#e8a13c"/>',70],
      ["游戏",'<rect x=".5" y="2" width="15" height="10" rx="2" fill="#fbfbfb" stroke="#9b9b9b"/><circle cx="11" cy="7" r="1.500" fill="#e49a3a"/><path d="M3 7h4M5 5v4" stroke="#8ab" />',70]];
    return `<style>
      :host{position:absolute;left:965px;top:12px;width:396px;height:754px;background:#fff;display:flex;flex-direction:column;overflow:hidden;font-size:12px;}
      .m{height:30px;flex:none;background:#f4f4f4;display:flex;align-items:center;font-size:12px;color:#444;letter-spacing:.1px;border-bottom:1px solid #d9d9d9;box-sizing:border-box;padding-bottom:6px;}
      .m span{flex:none;}
      .addr{height:26px;flex:none;background:#fff;display:flex;align-items:center;border-bottom:1px solid #d5d5d5;box-sizing:border-box;}
      .addr b{font:400 14.700px "Liberation Sans",sans-serif;color:#222;margin-left:1px;}
      .addr b span{color:#a3a3a3;}
      .bk{height:37px;flex:none;background:#f5f5f5;display:flex;align-items:center;box-sizing:border-box;color:#333;font-size:12px;white-space:nowrap;}
      .bk .it{display:flex;align-items:center;gap:3px;flex:none;}
      .bk .c{font-size:7px;color:#777;margin-left:9px;}
      .tabs{height:29px;flex:none;background:#e9e9e9;display:flex;align-items:flex-end;border-bottom:1px solid #c8c8c8;box-sizing:border-box;position:relative;z-index:1;}
      .t{height:28px;box-sizing:border-box;display:flex;align-items:center;flex:none;overflow:hidden;white-space:nowrap;}
      .t1{width:176px;margin-right:1px;background:#efefef;border-right:1px solid #c4c4c4;}
      .t2{width:194px;background:#fff;border:1px solid #c4c4c4;border-bottom:0;border-radius:3px 3px 0 0;padding-left:10px;height:29px;}
      .t i{font-style:normal;color:#999;font-size:13px;flex:none;}
      .t em{font-style:normal;flex:none;}
      .p{flex:1;min-height:0;display:flex;flex-direction:column;color:#111;white-space:nowrap;}
      .clip{height:18px;border-bottom:1px dashed #c8c8c8;padding-left:3px;flex:none;display:flex;align-items:flex-start;overflow:hidden;box-sizing:border-box;}
      .clip>*{margin-top:-8px;}
      .clip em,.h em{font-style:normal;color:#1a37a8;}
      .h{height:34px;flex:none;display:flex;align-items:center;padding-left:3px;border-bottom:1px solid #d5d5d5;box-sizing:border-box;}
      .coin{width:10px;height:7px;background:#f0b43c;border-radius:4px;margin:0 6px 0 9px;flex:none;}
      .clip .coin{margin-top:0;}
      .q{height:33px;flex:none;display:flex;align-items:center;color:#8a8a8a;margin-left:-4px;}
      .q em{font-style:normal;color:#1a3f92;}
      .q s{text-decoration:none;margin:0 13px;color:#888;}
      .body{height:26px;flex:none;font-size:14px;color:#111;display:flex;align-items:center;margin-left:-6px;}
      .act{height:29px;margin:10px 0 0 162px;flex:none;background:#f1f1f1;border:1px solid #dedede;border-bottom:0;display:flex;align-items:center;box-sizing:border-box;}
      .act span{flex:none;display:flex;align-items:center;justify-content:center;height:100%;border-right:1px solid #d9d9d9;box-sizing:border-box;}
      .img{margin-left:14px;flex:none;}
      .foot{display:flex;flex:1;margin-left:305px;border-left:1px solid #c9c9c9;padding-left:11px;font-size:12px;line-height:13px;color:#222;}
    </style>
    <div class="m">
      <svg width="8" height="14" style="margin-left:124px;margin-right:11px;flex:none"><path d="M1 2l5 5-5 5" fill="none" stroke="#999" stroke-width="1.300"/></svg>
      <span style="margin-right:18px">文件</span><span style="margin-right:18px">查看</span><span style="margin-right:18px">收藏</span><span style="margin-right:18px">工具</span><span style="margin-right:13px">帮助</span>
      <span style="width:28px;height:21px;margin-top:-1px;border:1px solid #ccc;border-bottom-left-radius:4px;box-sizing:border-box;display:flex;align-items:center;justify-content:center"><svg width="12" height="10"><path d="M3 0L0 3l2 2 1-1v6h6V4l1 1 2-2-3-3H7.500L6 1 4.500 0z" fill="#555"/></svg></span>
      <span style="margin-left:14px;width:9px;height:1.500px;background:#555"></span>
    </div>
    <div class="addr">
      <b>x.com<span>/question/giml/list</span></b>
      <svg width="14" height="13" style="margin-left:92px;flex:none"><path d="M1 1h4v4H1zM8 1h4v4H8zM1 8h4v4H1zM8 8h2v2H8zM11 10h2v3h-2zM6 1h1v6H6zM1 6h12v1H1z" fill="#6fba6a"/></svg>
      <svg width="12" height="15" style="margin-left:8px;flex:none"><path d="M8 0L1 9h4l-2 6 8-9H7z" fill="#3fc24e"/></svg>
      <span style="width:1px;height:26px;background:#ddd;margin-left:6px;flex:none"></span>
      <svg width="12" height="8" style="margin-left:7px;flex:none"><path d="M1 1l5 5 5-5" fill="none" stroke="#555" stroke-width="1.600"/></svg>
      <span style="width:1px;height:26px;background:#ddd;margin-left:7px;flex:none"></span>
      <svg width="15" height="15" style="margin-left:5px;flex:none" viewBox="0 0 15 15"><rect width="15" height="15" fill="#2a44c8"/><ellipse cx="7.500" cy="10" rx="3.500" ry="3" fill="#fff"/><circle cx="3" cy="7" r="1.300" fill="#fff"/><circle cx="6" cy="4" r="1.300" fill="#fff"/><circle cx="9.500" cy="4" r="1.300" fill="#fff"/><circle cx="12" cy="7" r="1.300" fill="#fff"/></svg>
      <svg width="5" height="3" style="margin:10px 0 0 2px;flex:none"><path d="M0 0h5L2.500 3z" fill="#555"/></svg>
      <span style="color:#aaa;font-size:14px;margin-left:4px;flex:none">点此搜索</span>
    </div>
    <div class="bk">
      <svg width="4" height="14" style="margin-left:26px;margin-right:15px;flex:none"><path d="M2 1v2M2 6v2M2 11v2" stroke="#bbb" stroke-width="2.500"/></svg>
      ${book.map(b => `<div class="it" style="width:${b[2]}px"><svg width="16" height="16" viewBox="0 0 16 15" style="flex:none">${b[1]}</svg>${b[0]}<span class="c">▼</span></div>`).join("")}
    </div>
    <div class="tabs">
      <div class="t t1"><svg width="7" height="14" style="flex:none"><circle cx="-1" cy="7" r="7" fill="#3a96d8"/></svg><em style="width:138px;margin-left:4px">这是什么标高-广联达服务</em><i style="margin-left:9px">✕</i></div>
      <div class="t t2"><svg width="17" height="18" viewBox="0 0 17 18" style="flex:none"><ellipse cx="8.500" cy="5" rx="5" ry="5" fill="#4aa3df"/><ellipse cx="8.500" cy="12" rx="8" ry="5.500" fill="#2a84c8"/><path d="M5 13c2 1 5 1 7-1" stroke="#fff" fill="none"/></svg><em style="width:137px;margin-left:3px">专业造价问题答疑平台-广</em><i style="margin-left:10px">✕</i></div>
      <div style="flex:1;text-align:center;font:700 18px/26px 'DejaVu Sans';color:#777">+</div>
    </div>
    <div class="p">
      <div class="clip"><em style="font-size:13px">吕毛了如何算定额</em><span class="coin"></span><span style="color:#e0a060">15</span><span style="margin-left:6px">[预算书]</span></div>
      <div class="h"><em style="font-size:14px">钢筋算量柱里的箍筋</em><span class="coin"></span><span style="color:#e89a50;width:14px">5</span><span style="font-size:11.500px">[钢筋抽样GGJ2013]</span></div>
      <div class="q">提问者：<em>喜欢上单曲循环</em><s>|</s>悬赏分：5分<s>|</s>回答次数：4次</div>
      <div class="body">柱里不规则箍筋如何布置</div>
      <div class="act">
        <span style="width:100px;gap:5px;color:#333"><svg width="13" height="13"><rect x="1" y="1" width="11" height="11" fill="none" stroke="#3cae55" stroke-width="1.200"/><path d="M3 6l3 3 4-5" fill="none" stroke="#3cae55"/></svg>发送到手机</span>
        <span style="width:33px"><svg width="17" height="12"><path d="M4 11a3 3 0 0 1 0-6 5 5 0 0 1 9 0 3 3 0 0 1 0 6z" fill="none" stroke="#3cae55" stroke-width="1.200"/></svg></span>
        <span style="width:32px"><svg width="13" height="13"><path d="M1 1l4 4M12 1L8 5M1 12l4-4M12 12L8 8M1 5V1h4M8 1h4v4M1 8v4h4M12 8v4H8" fill="none" stroke="#2ba84a" stroke-width="1.600"/></svg></span>
        <span style="width:32px"><svg width="13" height="13"><rect x="1" y="1" width="11" height="11" fill="none" stroke="#3cae55" stroke-width="1.200"/><rect x="4" y="7" width="5" height="5" fill="none" stroke="#3cae55"/></svg></span>
        <span style="width:32px"><svg width="14" height="13"><path d="M6 2H1v10h10V8M7 7c0-3 2-4 6-4M10 0l3 3-3 3" fill="none" stroke="#3cae55" stroke-width="1.200"/></svg></span>
      </div>
      <cad-drawing class="img"></cad-drawing>
      <div class="foot"><div>距离第一名还有<br><span style="margin-left:46px">一题●</span></div></div>
    </div>`;
  }
}

// the hand drawn red marks over everything
function arrow(x1, y1, x2, y2, w, hl, hw) {
  const a = Math.atan2(y2 - y1, x2 - x1), c = Math.cos(a), s = Math.sin(a);
  const bx = x2 - c * hl, by = y2 - s * hl;
  return `<line x1="${x1}" y1="${y1}" x2="${bx}" y2="${by}" stroke="#e4131a" stroke-width="${w}"/>
    <polygon points="${x2},${y2} ${bx - s * hw},${by + c * hw} ${bx + s * hw},${by - c * hw}" fill="#e4131a"/>`;
}

class RedMarks extends ShadowEl {
  render() {
    return `<style>:host{position:absolute;left:0;top:0;width:1361px;height:766px;display:block;pointer-events:none}svg{display:block}</style>
    <svg width="1361" height="766">
      ${arrow(1150,173,88,30,3.600,19,7)}
      ${arrow(90,32,113,156,3.600,19,7)}
      ${arrow(118,158,263,243,3.600,19,7)}
      ${arrow(394,255,298,332,3.600,19,7)}
      ${arrow(822,261,1155,458,3.600,19,7)}
      ${arrow(818,283,1232,688,3.600,19,7)}
      <ellipse cx="740" cy="295" rx="107" ry="77" transform="rotate(-4 740 295)" fill="none" stroke="#e4131a" stroke-width="3.500"/>
      <polygon points="1318,679 1230,554 1218,566 1207,538 1235,549 1225,558" fill="#ee4a4e"/>
    </svg>`;
  }
}

customElements.define("gg-desktop", GgDesktop);
customElements.define("tool-item", ToolItem);
customElements.define("app-window", AppWindow);
customElements.define("cad-strip", CadStrip);
customElements.define("section-fig", SectionFig);
customElements.define("param-dialog", ParamDialog);
customElements.define("cad-drawing", CadDrawing);
customElements.define("browser-window", BrowserWindow);
customElements.define("red-marks", RedMarks);
</script>
</body>
</html>
